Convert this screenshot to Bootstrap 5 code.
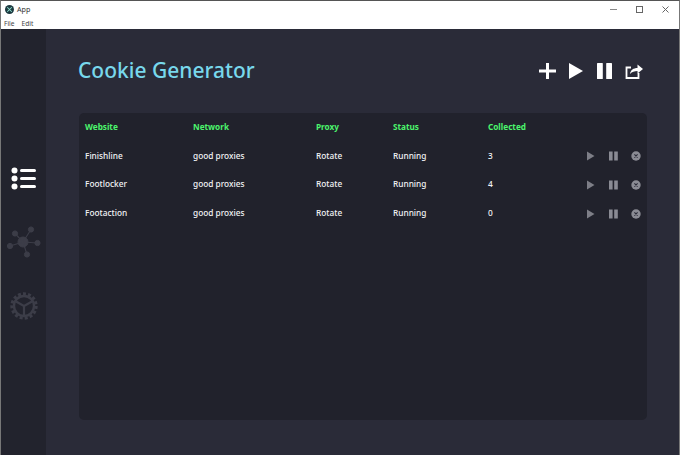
<!DOCTYPE html>
<html lang="en">
<head>
  <meta charset="UTF-8">
  <title>App</title>
  <link href="https://cdn.jsdelivr.net/npm/bootstrap@5.3.0/dist/css/bootstrap.min.css" rel="stylesheet">
  <style>
    html, body { height: 100%; }
    body { background: #2a2b38; font-family: "Noto Sans", sans-serif; overflow: hidden; }
    .app-frame { height: 455px; width: 680px; border-top: 1px solid #555; border-left: 1px solid #777; border-right: 1px solid #777; }
    .title-strip { height: 28px; background: #fff; color: #333; flex: none; }
    .title-row { height: 17px; padding-left: 4px; padding-top: 0; }
    .title-row .app-name { margin-left: 3px; font-size: 7.2px; }
    .menu-row { padding-left: 3px; padding-top: 1px; gap: 7px; font-size: 6.6px; color: #444; line-height: 10px; }
    .win-btns { margin-left: auto; gap: 19px; padding-right: 10px; }
    .side-rail { width: 45px; background: #22232d; flex: none; padding-top: 138px; }
    .rail-net { margin-top: 36px; }
    .rail-gear { margin-top: 34px; }
    .main-area { background: #2a2b38; padding: 0 32px 0 33px; }
    .head-row { height: 84px; padding-bottom: 1px; }
    .app-title { color: #78d8ec; font-size: 21px; font-weight: 500; margin: 0 0 0 -1px; line-height: 1; }
    .head-tools { gap: 13px; margin-right: 4px; }
    .task-panel { background: #21222c; border-radius: 5px; height: 307px; padding: 0 6px; }
    .task-table { --bs-table-bg: transparent; --bs-table-color: #eef0f2; color: #eef0f2; font-size: 8.3px; table-layout: fixed; width: 100%; margin: 0; }
    .task-table th, .task-table td { border: 0; padding: 0; vertical-align: middle; font-weight: 500; background: transparent; color: #f2f3f5; }
    .task-table th { color: #4cf56c; font-weight: 700; font-size: 8.2px; height: 28px; }
    .task-table td { height: 28.7px; padding-top: 1px; }
    .row-tools { justify-content: flex-end; align-items: center; padding-top: 1px; gap: 13.5px; }
  </style>
</head>
<body>
  <div class="app-frame d-flex flex-column">
    <div class="title-strip">
      <div class="title-row d-flex align-items-center">
        <svg width="9" height="9" viewBox="0 0 12 12"><circle cx="6" cy="6" r="6" fill="#1c3a40"/><path d="M3 3l6 6M9 3l-6 6" stroke="#8fe0d0" stroke-width="1.4"/></svg>
        <span class="app-name">App</span>
        <div class="win-btns d-flex align-items-center">
          <svg width="7" height="7" viewBox="0 0 7 7"><path d="M0 3.500h7" stroke="#888" stroke-width="1"/></svg>
          <svg width="7" height="7" viewBox="0 0 7 7"><rect x=".5" y=".5" width="6" height="6" fill="none" stroke="#666" stroke-width="1"/></svg>
          <svg width="7" height="7" viewBox="0 0 7 7"><path d="M.5 .5l6 6M6.500 .5l-6 6" stroke="#666" stroke-width="1"/></svg>
        </div>
      </div>
      <div class="menu-row d-flex"><span>File</span><span>Edit</span></div>
    </div>
    <div class="d-flex flex-grow-1">
      <div class="side-rail d-flex flex-column align-items-center">
        <svg width="26" height="23" viewBox="0 0 26 23" fill="#fff">
          <circle cx="3.500" cy="3.500" r="3"/><circle cx="3.500" cy="11.500" r="3"/><circle cx="3.500" cy="19.500" r="3"/>
          <rect x="9" y="2" width="16" height="3" rx="1.500"/><rect x="9" y="10" width="16" height="3" rx="1.500"/><rect x="9" y="18" width="16" height="3" rx="1.500"/>
        </svg>
        <svg class="rail-net" width="34" height="32" viewBox="0 0 34 32" fill="#3c3d48" stroke="#3c3d48">
          <circle cx="16" cy="16" r="5"/><circle cx="8" cy="7.500" r="2.600"/><circle cx="24" cy="3.500" r="2.600"/><circle cx="30.500" cy="17" r="2.600"/><circle cx="20" cy="28.500" r="2.600"/><circle cx="3" cy="20" r="2.600"/>
          <path d="M16 16L8 7.500M16 16L24 3.500M16 16L30.500 17M16 16L20 28.500M16 16L3 20" fill="none" stroke-width="1.100"/>
        </svg>
        <svg class="rail-gear" width="28" height="28" viewBox="0 0 28 28" fill="none" stroke="#3c3d48">
          <circle cx="14" cy="14" r="10" stroke-width="2.400"/>
          <circle cx="14" cy="14" r="12.200" stroke-width="3" stroke-dasharray="3 2.100"/>
          <path d="M14 14V23M14 14L6 9.500M14 14L22 9.500" stroke-width="2.200"/>
        </svg>
      </div>
      <div class="main-area flex-grow-1">
        <div class="head-row d-flex align-items-center justify-content-between">
          <h1 class="app-title">Cookie Generator</h1>
          <div class="head-tools d-flex align-items-center">
            <svg width="17" height="18" viewBox="0 0 17 18"><path d="M8.500 1v16M0 9h17" stroke="#fff" stroke-width="3"/></svg>
            <svg width="15" height="18" viewBox="0 0 15 18"><path d="M0 1l14 8-14 8z" fill="#fff"/></svg>
            <svg width="15" height="18" viewBox="0 0 15 18" fill="#fff"><rect x="0" y="1" width="5.800" height="16" rx=".6"/><rect x="9.200" y="1" width="5.800" height="16" rx=".6"/></svg>
            <svg width="18" height="18" viewBox="0 0 18 18" fill="none" stroke="#fff"><path d="M13.500 11v5H1.500V5.500H6" stroke-width="1.800"/><path d="M5 12c.5-4 3.500-6 7.500-6V2.500L18 7l-5.500 4.500V9C9.500 9 7 9.700 5 12z" fill="#fff" stroke="none"/></svg>
          </div>
        </div>
        <div class="task-panel">
          <table class="table task-table">
            <colgroup><col style="width:108px"><col style="width:123px"><col style="width:77px"><col style="width:95px"><col style="width:50px"><col></colgroup>
            <thead>
              <tr><th>Website</th><th>Network</th><th>Proxy</th><th>Status</th><th>Collected</th><th></th></tr>
            </thead>
            <tbody id="rows"></tbody>
          </table>
        </div>
      </div>
    </div>
  </div>

  <script src="https://cdn.jsdelivr.net/npm/bootstrap@5.3.0/dist/js/bootstrap.bundle.min.js"></script>
  <script>
    const tasks = [
      ['Finishline', 3],
      ['Footlocker', 4],
      ['Footaction', 0]
    ];
    const rowTools = `<div class="row-tools d-flex">
      <svg width="9" height="10" viewBox="0 0 9 10"><path d="M1 .5L8.500 5 1 9.500z" fill="#7d7e87"/></svg>
      <svg width="9" height="10" viewBox="0 0 9 10" fill="#8a8b94"><rect x="0" y=".5" width="3.600" height="9"/><rect x="5.200" y=".5" width="3.600" height="9"/></svg>
      <svg width="10" height="10" viewBox="0 0 10 10"><circle cx="5" cy="5" r="4.700" fill="#8a8b94"/><path d="M3.400 3.400l3.200 3.200M6.600 3.400L3.400 6.600" stroke="#2a2b38" stroke-width="1.100"/></svg>
    </div>`;
    const rows = document.getElementById('rows');
    tasks.forEach(t => {
      const tr = document.createElement('tr');
      tr.innerHTML = `<td>${t[0]}</td><td>good proxies</td><td>Rotate</td><td>Running</td><td>${t[1]}</td><td>${rowTools}</td>`;
      rows.appendChild(tr);
    });
  </script>
</body>
</html>
